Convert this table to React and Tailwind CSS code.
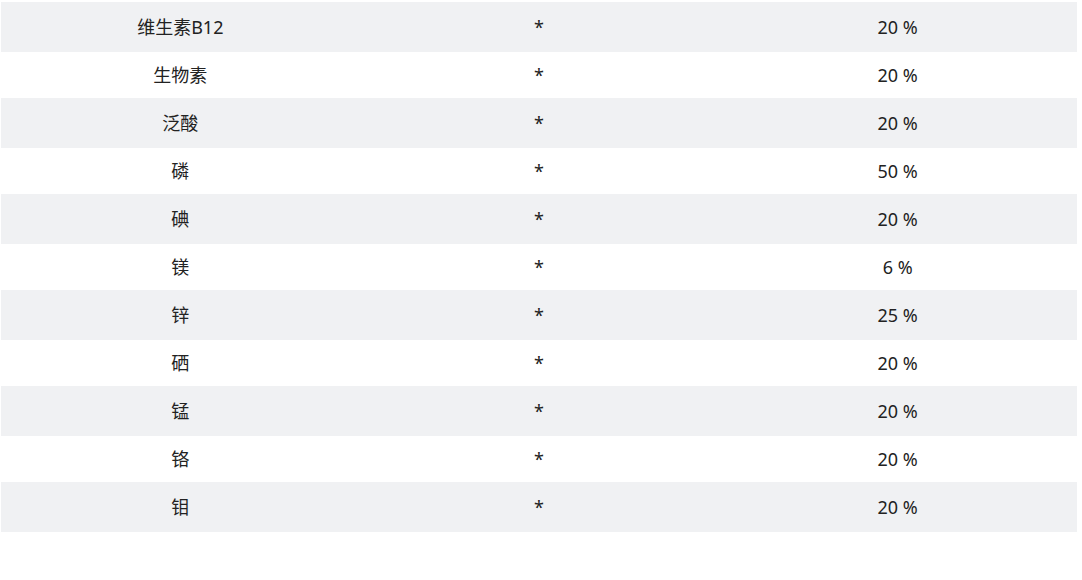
import React from 'react'

const rows = [
  ['维生素B12', '*', '20 %'],
  ['生物素', '*', '20 %'],
  ['泛酸', '*', '20 %'],
  ['磷', '*', '50 %'],
  ['碘', '*', '20 %'],
  ['镁', '*', '6 %'],
  ['锌', '*', '25 %'],
  ['硒', '*', '20 %'],
  ['锰', '*', '20 %'],
  ['铬', '*', '20 %'],
  ['钼', '*', '20 %'],
]

export default function App() {
  return (
    <div
      className="min-h-[580px] bg-white pt-[2px] pl-[1px]"
      style={{ fontFamily: '"Noto Sans", "Noto Sans CJK SC", sans-serif' }}
    >
      <table className="w-[1076px] table-fixed border-collapse text-[18px] text-[#222]">
        <tbody>
          {rows.map((row, i) => (
            <tr
              key={row[0]}
              className={i % 2 === 0 ? 'h-[50px] bg-[#f0f1f3]' : 'h-[46px] bg-white'}
            >
              {row.map((cell, j) => (
                <td key={j} className="p-0 text-center align-middle leading-none">
                  {cell}
                </td>
              ))}
            </tr>
          ))}
        </tbody>
      </table>
    </div>
  )
}
